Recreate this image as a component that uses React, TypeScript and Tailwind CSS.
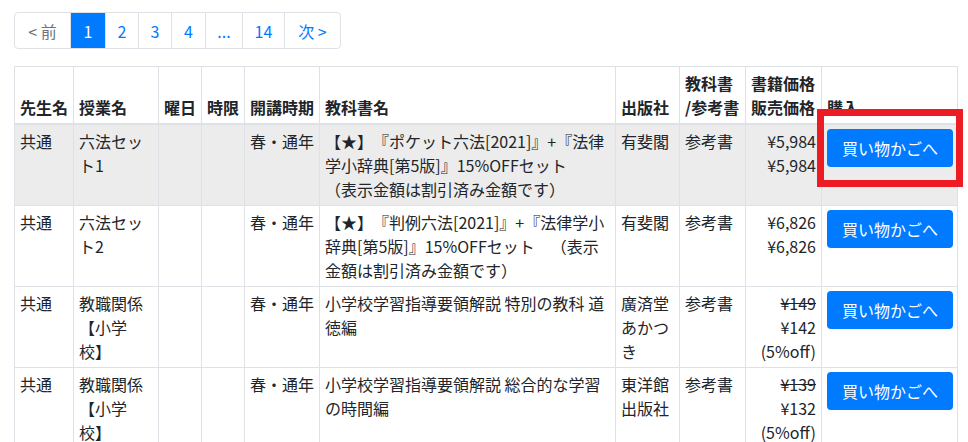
import React from "react";

const font = { fontFamily: '"Noto Sans CJK JP", "Noto Sans", sans-serif' };

type Row = {
  teacher: string;
  course: string;
  term: string;
  title: string[];
  publisher: string;
  kind: string;
  list?: string;
  price: string;
  off?: string;
  hover?: boolean;
};

const rows: Row[] = [
  {
    teacher: "共通",
    course: "六法セット1",
    term: "春・通年",
    title: [
      "【★】『ポケット六法[2021]』+『法律",
      "学小辞典[第5版]』15%OFFセット",
      "（表示金額は割引済み金額です）",
    ],
    publisher: "有斐閣",
    kind: "参考書",
    price: "¥5,984",
    list: "¥5,984",
    hover: true,
  },
  {
    teacher: "共通",
    course: "六法セット2",
    term: "春・通年",
    title: [
      "【★】『判例六法[2021]』+『法律学小",
      "辞典[第5版]』15%OFFセット　（表示",
      "金額は割引済み金額です）",
    ],
    publisher: "有斐閣",
    kind: "参考書",
    price: "¥6,826",
    list: "¥6,826",
  },
  {
    teacher: "共通",
    course: "教職関係【小学校】",
    term: "春・通年",
    title: ["小学校学習指導要領解説 特別の教科 道", "徳編"],
    publisher: "廣済堂あかつき",
    kind: "参考書",
    list: "¥149",
    price: "¥142",
    off: "(5%off)",
  },
  {
    teacher: "共通",
    course: "教職関係【小学校】",
    term: "春・通年",
    title: ["小学校学習指導要領解説 総合的な学習", "の時間編"],
    publisher: "東洋館出版社",
    kind: "参考書",
    list: "¥139",
    price: "¥132",
    off: "(5%off)",
  },
];

const pages = [
  { t: "< 前", w: "w-[57px]", cls: "text-[#6c757d] rounded-l" },
  { t: "1", w: "w-[36px]", cls: "bg-[#007bff] border-[#007bff] text-white" },
  { t: "2", w: "w-[34px]", cls: "text-[#007bff]" },
  { t: "3", w: "w-[34px]", cls: "text-[#007bff]" },
  { t: "4", w: "w-[35px]", cls: "text-[#007bff]" },
  { t: "...", w: "w-[38px]", cls: "text-[#007bff]" },
  { t: "14", w: "w-[43px]", cls: "text-[#007bff]" },
  { t: "次 >", w: "w-[57px]", cls: "text-[#007bff] rounded-r" },
];

const th = "border border-[#dee2e6] border-b-2 px-[5px] py-[4px] align-bottom text-left font-bold";
const td = "border border-[#dee2e6] px-[5px] py-[4px] align-top";

export default function App() {
  return (
    <div
      className="relative bg-white text-[#212529] text-[16px] leading-[24px] pt-[12px] pl-[14px] [text-spacing-trim:space-all]"
      style={font}
    >
      <ul className="flex mb-[17px]">
        {pages.map((p, i) => (
          <li
            key={i}
            className={`${p.w} h-[37px] -ml-px first:ml-0 flex items-center justify-center border border-[#dee2e6] ${p.cls}`}
          >
            {p.t}
          </li>
        ))}
      </ul>
      <table className="table-fixed border-collapse w-[943px]">
        <colgroup>
          <col className="w-[59px]" />
          <col className="w-[85px]" />
          <col className="w-[43px]" />
          <col className="w-[43px]" />
          <col className="w-[75px]" />
          <col className="w-[296px]" />
          <col className="w-[64px]" />
          <col className="w-[66px]" />
          <col className="w-[76px]" />
          <col className="w-[136px]" />
        </colgroup>
        <thead>
          <tr>
            <th className={th}>先生名</th>
            <th className={th}>授業名</th>
            <th className={th}>曜日</th>
            <th className={th}>時限</th>
            <th className={`${th} whitespace-nowrap`}>開講時期</th>
            <th className={th}>教科書名</th>
            <th className={th}>出版社</th>
            <th className={`${th} whitespace-nowrap`}>
              教科書
              <br />
              /参考書
            </th>
            <th className={`${th} whitespace-nowrap`}>
              書籍価格
              <br />
              販売価格
            </th>
            <th className={th}>購入</th>
          </tr>
        </thead>
        <tbody>
          {rows.map((r, i) => (
            <tr key={i} className={r.hover ? "bg-[#ececec]" : ""}>
              <td className={td}>{r.teacher}</td>
              <td className={td}>{r.course}</td>
              <td className={td}></td>
              <td className={td}></td>
              <td className={`${td} whitespace-nowrap`}>{r.term}</td>
              <td className={td}>
                {r.title.map((l, j) => (
                  <div key={j} className="whitespace-nowrap">
                    {l}
                  </div>
                ))}
              </td>
              <td className={td}>{r.publisher}</td>
              <td className={td}>{r.kind}</td>
              <td className={`${td} text-right whitespace-nowrap`}>
                {r.off ? (
                  <>
                    <div className="line-through">{r.list}</div>
                    <div>{r.price}</div>
                    <div>{r.off}</div>
                  </>
                ) : (
                  <>
                    <div>{r.list}</div>
                    <div>{r.price}</div>
                  </>
                )}
              </td>
              <td className={td}>
                <button className="w-[126px] h-[38px] rounded bg-[#007bff] text-white text-[16px] leading-[24px] flex items-center justify-center">
                  買い物かごへ
                </button>
              </td>
            </tr>
          ))}
        </tbody>
      </table>
      <div className="absolute left-[817px] top-[109px] w-[146px] h-[78px] border-[7px] border-[#ed1c24] pointer-events-none" />
    </div>
  );
}
